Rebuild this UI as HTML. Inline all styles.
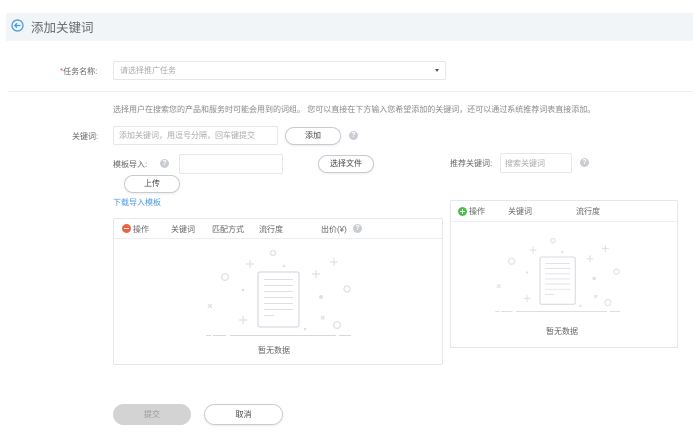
<!DOCTYPE html>
<html><head><meta charset="utf-8"><style>
*{margin:0;padding:0;box-sizing:border-box}
body{width:693px;height:443px;background:#fff;position:relative;overflow:hidden;font-family:"Liberation Sans","Noto Sans CJK SC",sans-serif;font-size:8px;color:#666}
.a{position:absolute;white-space:nowrap}
.box{position:absolute;border:1px solid #e3e6ea;border-radius:2px;background:#fff}
.btn{position:absolute;border:1px solid #c8ccd2;border-radius:10px;background:#fff;text-align:center;color:#444;box-shadow:0 1px 2px rgba(0,0,0,.08)}
.q{position:absolute;width:9px;height:9px;border-radius:50%;background:#c9cdd2;color:#fff;font-size:7px;line-height:9px;text-align:center;font-weight:bold}
.ph{color:#aaa}
.t{color:#666}
</style></head><body>
<div class="a" style="left:6px;top:13px;width:687px;height:28px;background:#f2f5f8"></div>
<svg class="a" style="left:11px;top:19px" width="13" height="13" viewBox="0 0 13 13"><circle cx="6.5" cy="6.5" r="5.5" fill="none" stroke="#3d9ae8" stroke-width="1.2"/><path d="M9.5 6.5H4M6 4.3L3.8 6.5 6 8.7" fill="none" stroke="#3d9ae8" stroke-width="1.2"/></svg>
<div class="a" style="left:31px;top:17px;font-size:12.5px;color:#666">添加关键词</div>

<div class="a t" style="left:60px;top:66px"><span style="color:#e55">*</span>任务名称:</div>
<div class="box" style="left:113px;top:61px;width:333px;height:19px"></div>
<div class="a ph" style="left:120px;top:65px">请选择推广任务</div>
<div class="a" style="left:435px;top:69px;width:0;height:0;border-left:2.5px solid transparent;border-right:2.5px solid transparent;border-top:3px solid #555"></div>
<div class="a" style="left:8px;top:91px;width:685px;height:1px;background:#eef0f2"></div>

<div class="a" style="left:113px;top:104px;color:#888">选择用户在搜索您的产品和服务时可能会用到的词组。 您可以直接在下方输入您希望添加的关键词，还可以通过系统推荐词表直接添加。</div>

<div class="a t" style="left:72px;top:131px">关键词:</div>
<div class="box" style="left:113px;top:126px;width:165px;height:19px"></div>
<div class="a ph" style="left:119px;top:130px">添加关键词，用逗号分隔，回车键提交</div>
<div class="btn" style="left:285px;top:127px;width:56px;height:18px;line-height:16px">添加</div>
<div class="q" style="left:349px;top:131px">?</div>

<div class="a t" style="left:113px;top:159px">模板导入:</div>
<div class="q" style="left:160px;top:159px">?</div>
<div class="box" style="left:179px;top:154px;width:104px;height:20px"></div>
<div class="btn" style="left:318px;top:155px;width:56px;height:18px;line-height:16px">选择文件</div>
<div class="btn" style="left:124px;top:175px;width:56px;height:18px;line-height:16px">上传</div>
<div class="a" style="left:113px;top:197px;color:#4a9be6">下载导入模板</div>

<div class="a t" style="left:450px;top:158px">推荐关键词:</div>
<div class="box" style="left:500px;top:153px;width:72px;height:20px"></div>
<div class="a ph" style="left:505px;top:158px">搜索关键词</div>
<div class="q" style="left:580px;top:158px">?</div>

<div class="box" style="left:113px;top:218px;width:330px;height:147px"></div>
<div class="a" style="left:114px;top:238px;width:328px;height:1px;background:#eceef0"></div>
<div class="a" style="left:122px;top:224px;width:9px;height:9px;border-radius:50%;background:#f0603e"></div>
<div class="a" style="left:124px;top:228px;width:5px;height:1.4px;background:#fff"></div>
<div class="a t" style="left:133px;top:224px">操作</div>
<div class="a t" style="left:171px;top:224px">关键词</div>
<div class="a t" style="left:212px;top:224px">匹配方式</div>
<div class="a t" style="left:259px;top:224px">流行度</div>
<div class="a t" style="left:321px;top:224px">出价(¥)</div>
<div class="q" style="left:353px;top:224px">?</div>
<div class="a t" style="left:258px;top:345px">暂无数据</div>

<div class="box" style="left:450px;top:200px;width:228px;height:148px"></div>
<div class="a" style="left:451px;top:221px;width:226px;height:1px;background:#eceef0"></div>
<div class="a" style="left:458px;top:207px;width:9px;height:9px;border-radius:50%;background:#4cbf4a"></div>
<div class="a" style="left:460px;top:211px;width:5px;height:1.4px;background:#fff"></div>
<div class="a" style="left:462px;top:209px;width:1.4px;height:5px;background:#fff"></div>
<div class="a t" style="left:469px;top:206px">操作</div>
<div class="a t" style="left:508px;top:206px">关键词</div>
<div class="a t" style="left:576px;top:206px">流行度</div>
<div class="a t" style="left:546px;top:326px">暂无数据</div>

<svg class="a" style="left:0;top:0" width="693" height="443">
<defs><g id="il" fill="none" stroke="#dfe1e6" stroke-width="1.3">
<path d="M-52 63.5H-47M-45 63.5H-32M-28 63.5H78M81 63.5H93" stroke="#d6d9de" stroke-width="1"/>
<rect x="0" y="0" width="41" height="55" rx="2" stroke="#d8dbe0" fill="#fff"/>
<path d="M6 7.5H35M6 13.5H35M6 19.5H35M6 25.5H35M6 31.5H35M6 37.5H35M6 43.5H16" stroke="#dcdfe4" stroke-width="1"/>
<circle cx="15" cy="-19" r="2.5"/><circle cx="-33" cy="5" r="3.5"/><circle cx="89" cy="17" r="3"/><circle cx="79" cy="53" r="3.5"/>
<path d="M-12-8h8M-8-12v8M72-10h8M76-14v8M54 2h8M58-2v8M-19 48h8M-15 44v8"/>
<path d="M-50 32l4 4M-46 32l-4 4M63 44l3.5 3.5M66.5 44l-3.5 3.5"/>
<g fill="#dfe1e6" stroke="none"><circle cx="26" cy="-6" r="1.3"/><circle cx="-15" cy="18" r="1.3"/><circle cx="63" cy="25" r="2"/><circle cx="47" cy="57" r="1.3"/></g>
</g></defs>
<use href="#il" transform="translate(258,272)"/>
<use href="#il" transform="translate(540,257) scale(0.86)"/>
</svg>

<div class="a" style="left:113px;top:404px;width:78px;height:21px;border-radius:11px;background:#d3d3d3;color:#999;text-align:center;line-height:21px">提交</div>
<div class="btn" style="left:204px;top:404px;width:79px;height:21px;line-height:19px;border-radius:11px">取消</div>
</body></html>
